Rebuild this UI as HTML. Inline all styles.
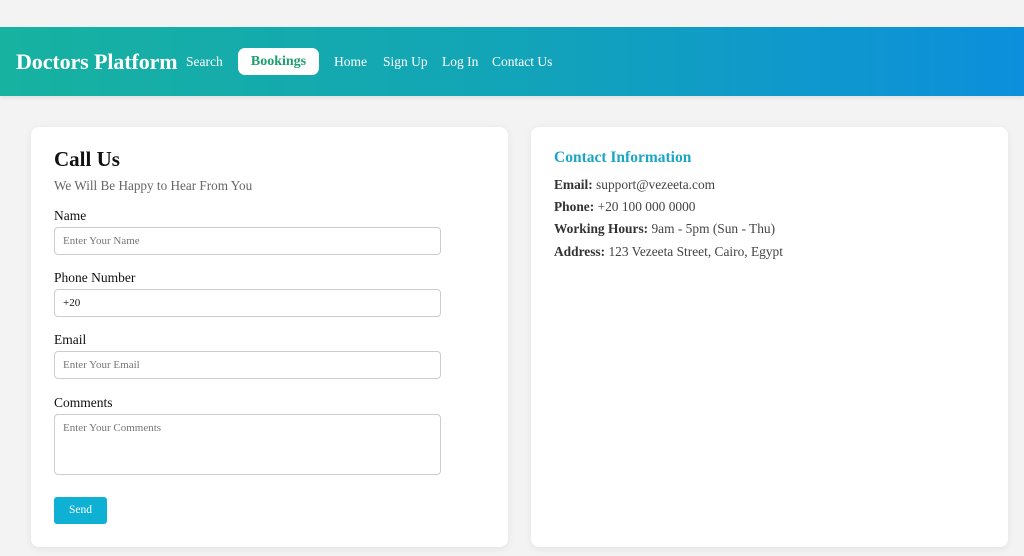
<!DOCTYPE html>
<html><head><meta charset="utf-8"><style>
*{box-sizing:border-box;margin:0;padding:0}
body{width:1024px;height:556px;background:#f3f3f3;font-family:"Liberation Serif","DejaVu Serif",serif;position:relative;overflow:hidden}
.hdr{position:absolute;left:0;top:27px;width:1024px;height:69px;background:linear-gradient(90deg,#17b2a0 0%,#12a4b8 50%,#0c8fdc 100%);box-shadow:0 2px 4px rgba(0,0,0,.08)}
.logo{position:absolute;left:16px;top:49px;color:#fff;font-weight:bold;font-size:22px;letter-spacing:-0.1px}
.nav{position:absolute;top:54px;color:#fff;font-size:13.5px}
.bk{position:absolute;left:238px;top:48px;width:81px;height:27px;background:#fff;border-radius:7px;color:#1e9e6e;font-weight:bold;font-size:14px;text-align:center;line-height:27px}
.card{position:absolute;top:127px;width:477px;height:420px;background:#fff;border-radius:8px;box-shadow:0 2px 8px rgba(0,0,0,.07)}
h1{position:absolute;left:54px;top:147px;font-size:21px;color:#111}
.sub{position:absolute;left:54px;top:178px;font-size:13.2px;color:#666}
.lbl{position:absolute;left:54px;font-size:13.5px;color:#111}
.inp{position:absolute;left:54px;width:387px;height:28px;border:1px solid #ccc;border-radius:4px;font-size:11px;color:#777;padding:7px 8px}
.btn{position:absolute;left:54px;top:497px;width:53px;height:27px;background:#0eb0d4;border-radius:3px;color:#fff;font-size:11.5px;text-align:center;line-height:27px}
.ci{position:absolute;left:554px;font-size:13.4px;color:#444}
.ci b{color:#333}
</style></head><body>
<div class="hdr"></div>
<div class="logo">Doctors Platform</div>
<div class="nav" style="left:186px">Search</div>
<div class="bk">Bookings</div>
<div class="nav" style="left:334px">Home</div>
<div class="nav" style="left:383px">Sign Up</div>
<div class="nav" style="left:442px">Log In</div>
<div class="nav" style="left:492px">Contact Us</div>

<div class="card" style="left:31px"></div>
<div class="card" style="left:531px"></div>

<h1>Call Us</h1>
<div class="sub">We Will Be Happy to Hear From You</div>
<div class="lbl" style="top:208px">Name</div>
<div class="inp" style="top:227px">Enter Your Name</div>
<div class="lbl" style="top:270px">Phone Number</div>
<div class="inp" style="top:289px;color:#111">+20</div>
<div class="lbl" style="top:332px">Email</div>
<div class="inp" style="top:351px">Enter Your Email</div>
<div class="lbl" style="top:395px">Comments</div>
<div class="inp" style="top:414px;height:61px">Enter Your Comments</div>
<div class="btn">Send</div>

<div class="ci" style="top:149px;font-size:15.5px;font-weight:bold;color:#1aa6c4">Contact Information</div>
<div class="ci" style="top:177px"><b>Email:</b> support@vezeeta.com</div>
<div class="ci" style="top:199px"><b>Phone:</b> +20 100 000 0000</div>
<div class="ci" style="top:221px"><b>Working Hours:</b> 9am - 5pm (Sun - Thu)</div>
<div class="ci" style="top:244px"><b>Address:</b> 123 Vezeeta Street, Cairo, Egypt</div>
</body></html>
